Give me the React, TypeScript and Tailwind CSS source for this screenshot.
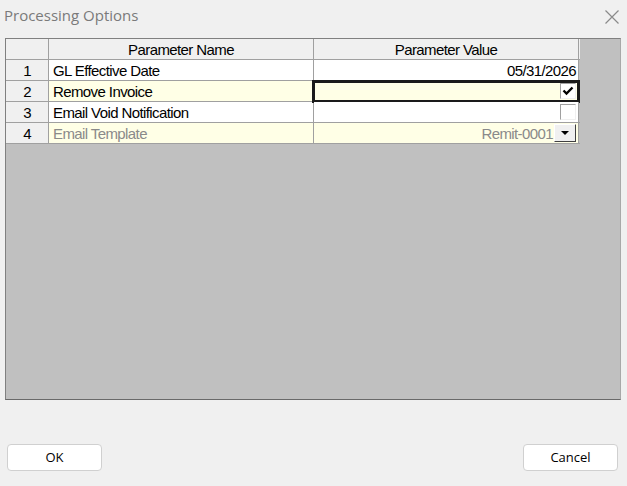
import { useState } from 'react'

type Param = {
  id: number
  name: string
  kind: 'date' | 'check' | 'select'
  value?: string
  checked?: boolean
  disabled?: boolean
}

const PARAMS: Param[] = [
  { id: 1, name: 'GL Effective Date', kind: 'date', value: '05/31/2026' },
  { id: 2, name: 'Remove Invoice', kind: 'check', checked: true },
  { id: 3, name: 'Email Void Notification', kind: 'check', checked: false },
  { id: 4, name: 'Email Template', kind: 'select', value: 'Remit-0001', disabled: true },
]

function CheckBox({ checked }: { checked: boolean }) {
  return (
    <div className="w-[16px] h-[16px] bg-white border-t border-l border-[#a0a0a0] border-b border-r border-b-[#f0f0f0] border-r-[#f0f0f0] flex items-center justify-center">
      {checked && (
        <svg width="12" height="12" viewBox="0 0 12 12">
          <path d="M1.5 5.5 L4.5 8.5 L10.5 2.5" fill="none" stroke="#000" strokeWidth="2.4" />
        </svg>
      )}
    </div>
  )
}

function DropButton() {
  return (
    <div className="w-[22px] h-[18px] bg-[#f0f0f0] border border-t-white border-l-white border-r-[#404040] border-b-[#404040] flex items-center justify-center">
      <svg width="10" height="6" viewBox="0 0 10 6">
        <path d="M1 1 L9 1 L5 5 Z" fill="#000" />
      </svg>
    </div>
  )
}

export default function App() {
  const [sel] = useState(2)

  return (
    <div className="w-[627px] h-[486px] bg-[#f0f0f0] flex flex-col select-none" style={{ fontFamily: '"Liberation Sans", Arial, sans-serif' }}>
      {/* title bar */}
      <div className="h-[38px] flex items-start justify-between pl-[4px] pr-[7px] pt-[4px]">
        <span className="text-[15px] text-[#7a7a7a]" style={{ fontFamily: '"Open Sans", sans-serif' }}>Processing Options</span>
        <svg width="16" height="16" viewBox="0 0 16 16" className="mt-[5px]">
          <path d="M1.5 1.5 L14.5 14.5 M14.5 1.5 L1.5 14.5" stroke="#8a8a8a" strokeWidth="1.2" />
        </svg>
      </div>

      {/* grid */}
      <div className="ml-[5px] w-[616px] h-[362px] bg-[#c0c0c0] border border-[#808080] border-r-[#a8a8a8] border-b-[#696969]">
        <div className="w-[574px] text-[15px] tracking-[-0.6px] leading-none">
          {/* header */}
          <div className="flex h-[21px] bg-[#f0f0f0] border-b border-[#a0a0a0]">
            <div className="w-[43px] border-r border-[#a0a0a0]" />
            <div className="w-[265px] border-r border-[#a0a0a0] flex items-center justify-center pt-[1px] text-black">Parameter Name</div>
            <div className="w-[265px] border-r border-[#a0a0a0] flex items-center justify-center pt-[1px] text-black">Parameter Value</div>
          </div>
          {PARAMS.map(p => {
            const bg = p.id % 2 === 0 ? 'bg-[#ffffe6]' : 'bg-white'
            const text = p.disabled ? 'text-[#8a8a8a]' : 'text-black'
            return (
              <div key={p.id} className="flex h-[21px] border-b border-[#a0a0a0]">
                <div className="w-[43px] bg-[#f0f0f0] border-r border-[#a0a0a0] flex items-center justify-center pt-[1px] text-black">{p.id}</div>
                <div className={`w-[265px] ${bg} border-r border-[#a0a0a0] flex items-center pl-[4px] pt-[1px] ${text}`}>{p.name}</div>
                <div className={`relative w-[265px] ${bg} border-r border-[#a0a0a0] flex items-center justify-end pr-[2px] ${text}`}>
                  {p.kind === 'date' && <span className="pt-[1px]">{p.value}</span>}
                  {p.kind === 'check' && <CheckBox checked={!!p.checked} />}
                  {p.kind === 'select' && (
                    <>
                      <span className="mr-[1px] pt-[1px]">{p.value}</span>
                      <DropButton />
                    </>
                  )}
                  {sel === p.id && (
                    <div className="absolute left-[-2px] right-[-2px] top-[-1px] bottom-[-2px] border-[3px] border-[#1a1a1a] pointer-events-none" />
                  )}
                </div>
              </div>
            )
          })}
        </div>
      </div>

      {/* buttons */}
      <div className="flex justify-between px-[7px] pr-[9px] mt-[44px]" style={{ fontFamily: '"Open Sans", sans-serif' }}>
        <button className="w-[95px] h-[27px] bg-white border border-[#d0d0d0] rounded-[4px] text-[13px] text-black">OK</button>
        <button className="w-[95px] h-[27px] bg-white border border-[#d0d0d0] rounded-[4px] text-[13px] text-black">Cancel</button>
      </div>
    </div>
  )
}
